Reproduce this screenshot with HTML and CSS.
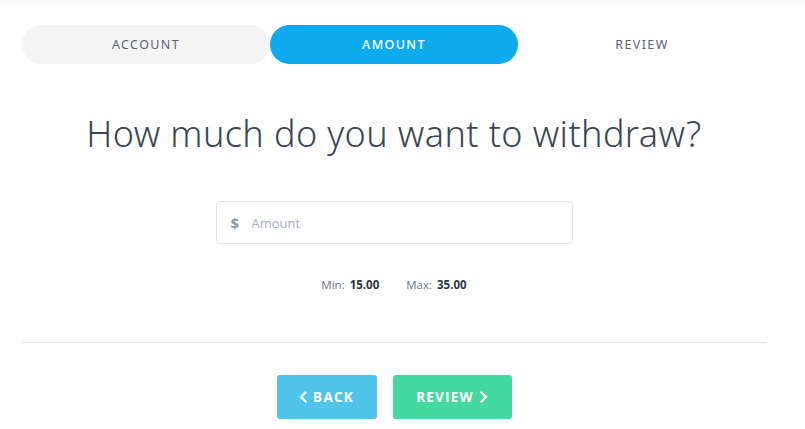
FILE: index.html
```html
<!DOCTYPE html>
<html>
<head>
<meta charset="utf-8">
<link rel="stylesheet" href="styles.css">
</head>
<body>
<div class="topbar"></div>
<div class="page">
  <nav class="steps">
    <div class="step done">ACCOUNT</div>
    <div class="step active">AMOUNT</div>
    <div class="step">REVIEW</div>
  </nav>
  <h1 class="title">How much do you want to withdraw?</h1>
  <div class="field">
    <span class="dollar">$</span>
    <input class="amount" type="text" placeholder="Amount">
  </div>
  <div class="limits">
    <span class="limit">Min: <b>15.00</b></span>
    <span class="limit">Max: <b>35.00</b></span>
  </div>
  <hr class="divider">
  <div class="actions">
    <button class="btn back"><svg class="chev" viewBox="0 0 8 12" width="8" height="12"><path d="M6.5 1.5 L2 6 L6.5 10.5" fill="none" stroke="#fff" stroke-width="2.4" stroke-linecap="round" stroke-linejoin="round"/></svg>BACK</button>
    <button class="btn next">REVIEW<svg class="chev" viewBox="0 0 8 12" width="8" height="12"><path d="M1.5 1.5 L6 6 L1.5 10.5" fill="none" stroke="#fff" stroke-width="2.4" stroke-linecap="round" stroke-linejoin="round"/></svg></button>
  </div>
</div>
</body>
</html>
```
FILE: styles.css
```css
* { box-sizing: border-box; }
html, body { margin: 0; padding: 0; background: #fff; }
body { font-family: "Open Sans", "Noto Sans", sans-serif; color: #3a4556; }
.topbar { height: 6px; background: linear-gradient(#f7f7f7, #fcfcfc); }
.page { padding: 19px 39px 0 22px; display: flex; flex-direction: column; align-items: center; }
.steps { display: flex; width: 744px; height: 39px; }
.step { flex: 1; display: flex; align-items: center; justify-content: center; border-radius: 20px; font-family: "Noto Sans", sans-serif; font-size: 12.5px; letter-spacing: 1.4px; color: #5a6472; }
.step.done { background: #f4f4f4; }
.step.active { background: #0eaaee; color: #fff; font-weight: 500; }
.title { margin: 48px 0 0; font-family: "Noto Sans", sans-serif; font-weight: 300; font-size: 36px; line-height: 44px; color: #3a4556; letter-spacing: 0.4px; }
.field { margin-top: 45px; width: 357px; height: 43px; border: 1px solid #dfe3e8; border-radius: 4px; display: flex; align-items: center; padding-left: 14px; }
.dollar { font-weight: 700; font-size: 15px; color: #8e97a5; width: 21px; }
.amount { border: none; outline: none; font-family: "Open Sans", sans-serif; font-size: 13px; color: #3a4556; flex: 1; padding: 0; background: transparent; }
.amount::placeholder { color: #a6aebb; }
.limits { margin-top: 33px; display: flex; gap: 27px; font-size: 11.5px; color: #6b7585; }
.limit b { color: #2c3645; font-weight: 700; margin-left: 2px; }
.divider { align-self: stretch; margin: 50px 0 0; border: none; border-top: 1px solid #dfe3e8; width: 744px; }
.actions { margin-top: 32px; display: flex; gap: 16px; }
.btn { height: 44px; border: none; border-radius: 3px; color: #fff; font-family: "Open Sans", sans-serif; font-weight: 700; font-size: 13.5px; letter-spacing: 1.2px; display: flex; align-items: center; justify-content: center; gap: 6px; padding: 0; }
.btn.back { width: 100px; background: #4fc5e9; }
.btn.next { width: 119px; background: #43d99f; }
```
